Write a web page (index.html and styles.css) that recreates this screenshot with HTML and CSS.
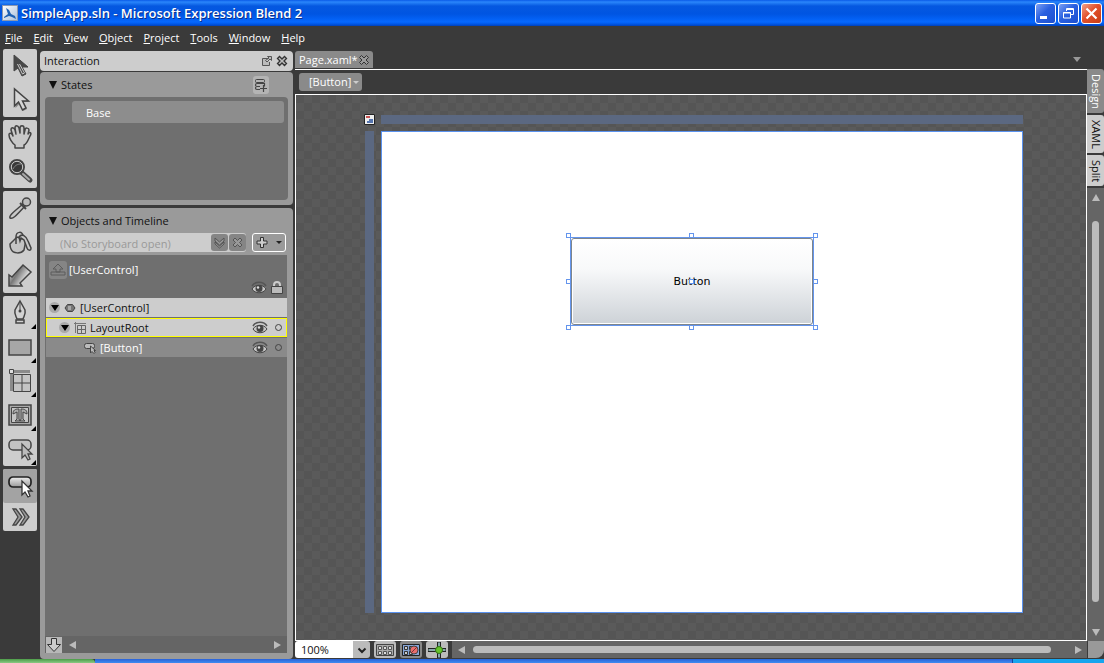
FILE: index.html
```html
<!DOCTYPE html>
<html lang="en">
<head>
    <meta charset="UTF-8">
    <meta name="viewport" content="width=device-width, initial-scale=1.0">
    <title>SimpleApp.sln - Microsoft Expression Blend 2</title>
    <link rel="stylesheet" href="styles.css">
</head>
<body>
    <!-- Title bar -->
    <header class="titlebar">
        <svg class="app-icon" width="16" height="16" viewBox="0 0 16 16">
            <defs><linearGradient id="appFill" x2="1" y2="1"><stop stop-color="#fff"/><stop offset="1" stop-color="#a9bfdb"/></linearGradient></defs>
            <rect x=".5" y=".5" width="15" height="15" fill="url(#appFill)" stroke="#8c99b0"/>
            <path d="M2 12L6 9L4 3L7 5L9 9L13 11L14 14L10 12L7 11L2 13Z" fill="#1f62b4"/>
        </svg>
        <h1>SimpleApp.sln - Microsoft Expression Blend 2</h1>
        <div class="window-buttons">
            <button type="button" aria-label="Minimize"><svg width="19" height="19" viewBox="0 0 19 19"><path d="M4 12h7v3H4z" fill="#fff"/></svg></button>
            <button type="button" aria-label="Restore"><svg width="19" height="19" viewBox="0 0 19 19" fill="none" stroke="#fff"><path d="M7.500 7V4.500h7v6H12M7 5.500h8M4.500 8.500h7v5.500h-7zM4 9h8"/></svg></button>
            <button type="button" class="close" aria-label="Close"><svg width="19" height="19" viewBox="0 0 19 19"><path d="M4.500 4.500l10 10M14.500 4.500l-10 10" stroke="#fff" stroke-width="2.200"/></svg></button>
        </div>
    </header>

    <nav class="menu">
        <button type="button"><u>F</u>ile</button>
        <button type="button"><u>E</u>dit</button>
        <button type="button"><u>V</u>iew</button>
        <button type="button"><u>O</u>bject</button>
        <button type="button"><u>P</u>roject</button>
        <button type="button"><u>T</u>ools</button>
        <button type="button"><u>W</u>indow</button>
        <button type="button"><u>H</u>elp</button>
    </nav>

    <main class="workspace">
        <!-- Toolbox -->
        <aside class="toolbox">
            <div class="tool-group">
                <button type="button" aria-label="Selection"><svg viewBox="0 0 28 28"><path d="M8 3v16l4-3 4 8 4-2-4-7h6z" fill="#484848" stroke="#444"/><path d="M11.500 12l5 10 2-1-5-9" fill="none" stroke="#ccc"/></svg></button>
                <button type="button" aria-label="Direct selection"><svg viewBox="0 0 28 28"><path d="M9.500 5v17l4-4 3.500 7 4-2-3.500-7h6z" fill="#888"/><path d="M8.500 3v17l4-4 4 8 3.500-2-3.500-7h6z" fill="#d6d6d6" stroke="#444" stroke-width="1.500"/></svg></button>
            </div>
            <div class="tool-group">
                <button type="button" aria-label="Pan"><svg viewBox="0 0 28 28"><path d="M9 25v-3c-3-2-6-7-6-10 0-3 3-2 4 1L5 7c0-3 3-3 4 0l1 4-1-6c0-3 3-3 4 0l1 5V5c0-3 4-3 4 0v6l1-4c0-3 4-2 4 0l-1 4c2-3 4-1 2 2-2 4-3 8-6 9v3z" fill="#c8c8c8" stroke="#444" stroke-width="1.500" stroke-linejoin="round"/></svg></button>
                <button type="button" aria-label="Zoom"><svg viewBox="0 0 28 28"><path d="M15 15l9 8" stroke="#484848" stroke-width="5" stroke-linecap="round"/><path d="M17 17l6 5.500" stroke="#aaa" stroke-width="2" stroke-linecap="round"/><circle cx="11" cy="10" r="7" fill="#383838" stroke="#444" stroke-width="2"/><circle cx="11" cy="10" r="5.700" fill="none" stroke="#ccc"/><path d="M7 12c2-4 5-5 8-5" stroke="#888" fill="none"/></svg></button>
            </div>
            <div class="tool-group">
                <button type="button" aria-label="Eyedropper"><svg viewBox="0 0 28 28"><path d="M4 24c-1-2 1-4 13-14l2 2C9 23 7 25 4 24z" fill="#c8c8c8" stroke="#444" stroke-width="1.500"/><path d="M14 9l6 6" stroke="#444" stroke-width="2"/><circle cx="20.500" cy="8" r="4" fill="#bbb" stroke="#444" stroke-width="1.500"/></svg></button>
                <button type="button" aria-label="Paint bucket"><svg viewBox="0 0 28 28"><path d="M4 16l7-7 9 3-2 10c-3 4-11 4-13-1-1-2-1-3-1-5z" fill="#c4c4c4" stroke="#444" stroke-width="1.500"/><path d="M10 16V9c0-6 7-6 7-1v2" fill="none" stroke="#444" stroke-width="1.500"/><path d="M13 9c3-4 7-1 9 4l3 7c0 3-3 3-4 0l-3-8-3-2-1 3z" fill="#c8c8c8" stroke="#444" stroke-width="1.500"/></svg></button>
                <button type="button" aria-label="Brush transform"><svg viewBox="0 0 28 28"><defs><linearGradient id="brushFill" x1="0" y1="0" x2="1" y2=".6"><stop offset=".2" stop-color="#ccc"/><stop offset=".45" stop-color="#777"/><stop offset=".9" stop-color="#eee"/></linearGradient></defs><path d="M3 24V13l3 2L17 3l8 7-11 11 2 3z" fill="url(#brushFill)" stroke="#444" stroke-width="1.500"/></svg></button>
            </div>
            <div class="tool-group">
                <button type="button" class="more" aria-label="Pen"><svg viewBox="0 0 28 28"><path d="M14 2l5 9c1 4-1 6-2 9h-6c-1-3-3-5-2-9z" fill="#d2d2d2" stroke="#444" stroke-width="1.500"/><path d="M14 3v9" stroke="#444"/><circle cx="14" cy="12" r="1.500" fill="#444"/><path d="M10 21h8v3h-8z" fill="#d2d2d2" stroke="#444" stroke-width="1.500"/></svg></button>
                <button type="button" class="more" aria-label="Rectangle"><svg viewBox="0 0 28 28"><rect x="3" y="7" width="22" height="15" fill="#a6a6a6" stroke="#444" stroke-width="1.500"/></svg></button>
                <button type="button" class="more" aria-label="Grid"><svg viewBox="0 0 28 28"><path d="M4 3h20v3H7v18H4z" fill="#8a8a8a"/><path d="M7.500 7.500h17v17h-17zM16 8v16M8 16h16" fill="#c4c4c4" stroke="#444"/><path d="M3.500 2.500h4v4h-4z" fill="#ddd" stroke="#444"/></svg></button>
                <button type="button" class="more" aria-label="Text block"><svg viewBox="0 0 28 28"><path d="M3 4h22v20H3z" fill="#aaa" stroke="#444" stroke-width="1.500"/><path d="M5.500 6.500h17v15h-17z" fill="#c5c5c5" stroke="#444"/><path d="M7 13c0-4 2-5 6-5v10l1 2H9l2-2v-7l-2 1zM21 13c0-4-2-5-6-5v10l-1 2h5l-2-2v-7l2 1z" fill="#aaa" stroke="#444"/></svg></button>
                <button type="button" class="more" aria-label="Button tool"><svg viewBox="0 0 28 28"><rect x="3" y="5" width="22" height="10" rx="4" fill="#c2c2c2" stroke="#444" stroke-width="1.500"/><path d="M16 9v14l3-3 3 5 2-1-2-5h4z" fill="#bbb" stroke="#444" stroke-width="1.300"/></svg></button>
            </div>
            <div class="tool-group">
                <button type="button" class="selected" aria-label="Button"><svg viewBox="0 0 28 28"><defs><linearGradient id="toolFill" x2="0" y2="1"><stop stop-color="#eee"/><stop offset="1" stop-color="#999"/></linearGradient></defs><rect x="3" y="5" width="22" height="10" rx="4" fill="url(#toolFill)" stroke="#222" stroke-width="1.700"/><path d="M16 9v14l3-3 3 5 2-1-2-5h4z" fill="#fff" stroke="#333" stroke-width="1.300"/></svg></button>
                <button type="button" class="library" aria-label="Asset library"><svg viewBox="0 0 28 28"><path d="M7 6h3l6 8-6 8H7l5-8zM14 6h3l6 8-6 8h-3l5-8z" fill="#999" stroke="#444" stroke-width="1.300"/></svg></button>
            </div>
        </aside>

        <!-- Interaction panel -->
        <section class="interaction">
            <header class="panel-head">
                <h2>Interaction</h2>
                <button type="button" aria-label="Float panel"><svg width="12" height="12" viewBox="0 0 12 12" fill="none" stroke="#555"><path d="M7 3.500H1.500v7h7V7M6.500 1.500h4v4L9 4 6 7 4.500 5.500 8 3z" fill="#bbb"/></svg></button>
                <button type="button" aria-label="Close panel"><svg width="12" height="12" viewBox="0 0 12 12"><path d="M1.500 3.500l2-2L6 4l2.500-2.500 2 2L8 6l2.500 2.500-2 2L6 8l-2.500 2.500-2-2L4 6z" fill="#bbb" stroke="#333" stroke-width="1.300"/></svg></button>
            </header>
            <section class="card states">
                <div class="card-head">
                    <h3>States</h3>
                    <button type="button" class="add-state" aria-label="Add state group"><svg width="15" height="16" viewBox="0 0 15 16" fill="none" stroke="#444"><rect x="2.500" y="2.500" width="9" height="3" rx="1"/><path d="M7 9.500H4c-2 0-2-3 0-3h7.500v3M7 12.500H4c-2 0-2-3 0-3M10.500 8v7M7 11.500h7" stroke-width="1.200"/></svg></button>
                </div>
                <div class="state-list">
                    <button type="button">Base</button>
                </div>
            </section>
            <section class="card objects">
                <div class="card-head">
                    <h3>Objects and Timeline</h3>
                </div>
                <div class="storyboard">
                    <div class="storyboard-box">
                        <input type="text" value="(No Storyboard open)" aria-label="Storyboard" readonly>
                        <button type="button" aria-label="Open storyboard"><svg width="15" height="15" viewBox="0 0 15 15"><path d="M3 3l4.500 4L12 3v3l-4.500 4L3 6zM3 7l4.500 4L12 7v2l-4.500 4L3 9z" fill="#999" stroke="#555"/></svg></button>
                        <button type="button" aria-label="Close storyboard"><svg width="15" height="15" viewBox="0 0 15 15"><path d="M3 5l2-2 2.500 2.500L10 3l2 2-2.500 2.500L12 10l-2 2-2.500-2.500L5 12l-2-2 2.500-2.500z" fill="#999" stroke="#555"/></svg></button>
                    </div>
                    <button type="button" class="new-storyboard" aria-label="New storyboard"><svg width="30" height="15" viewBox="0 0 30 15"><path d="M6.500 2.500h3v3.500H13v3h-3.500v3.500h-3V9H3V6h3.500z" fill="#ccc" stroke="#333"/><path d="M22 6h6l-3 3z" fill="#222"/></svg></button>
                </div>
                <div class="tree">
                    <div class="tree-top">
                        <div class="scope">
                            <button type="button" aria-label="Return scope"><svg width="18" height="18" viewBox="0 0 18 18"><path d="M9 3l5 5h-3v3H7V8H4zM2 11h14v3H2z" fill="#858585" stroke="#5c5c5c"/></svg></button>
                            <span>[UserControl]</span>
                        </div>
                        <div class="column-icons">
                            <svg class="eye" viewBox="0 0 16 14"><use href="#eye"/></svg>
                            <svg width="12" height="13" viewBox="0 0 12 13"><path d="M3 6V4c0-4 6-4 6 0v2" fill="none" stroke="#ccc" stroke-width="2"/><path d="M.5 5.500h11v7H.5z" fill="#bbb" stroke="#444"/></svg>
                        </div>
                    </div>
                    <div class="row light">
                        <button type="button" class="expander" aria-label="Collapse UserControl"></button>
                        <svg class="kind" viewBox="0 0 12 12"><path d="M1 6l2.500-3.500h5L11 6 8.500 9.500h-5z" fill="#777" stroke="#444"/><path d="M4 4h3v4H4z" fill="#aaa"/></svg>
                        <span>[UserControl]</span>
                    </div>
                    <div class="row light current">
                        <button type="button" class="expander" aria-label="Collapse LayoutRoot"></button>
                        <svg class="kind" viewBox="0 0 12 12" fill="none" stroke="#666"><path d="M0 1.500h12M1.500 0v11" stroke="#777"/><path d="M3.500 3.500h8v8h-8zM7.500 3.500v8M3.500 7.500h8"/></svg>
                        <span>LayoutRoot</span>
                        <button type="button" class="toggle" aria-label="Hide LayoutRoot"><svg class="eye" viewBox="0 0 16 14"><use href="#eye"/></svg></button>
                        <button type="button" class="lock" aria-label="Lock LayoutRoot"></button>
                    </div>
                    <div class="row child">
                        <svg class="kind" viewBox="0 0 12 12"><rect x=".5" y="1.500" width="10" height="5" rx="2" fill="#bbb" stroke="#444"/><path d="M6.500 4v7L8 9.500l2 2 1-1-1-2h1.500z" fill="#bbb" stroke="#444"/></svg>
                        <span>[Button]</span>
                        <button type="button" class="toggle" aria-label="Hide Button"><svg class="eye" viewBox="0 0 16 14"><use href="#eye"/></svg></button>
                        <button type="button" class="lock" aria-label="Lock Button"></button>
                    </div>
                    <div class="tree-foot">
                        <button type="button" aria-label="Arrange by Z order"><svg width="16" height="16" viewBox="0 0 16 16"><path d="M5.500 1.500h5v6h4L8 14.500 1.500 7.500h4z" fill="#ccc" stroke="#333"/></svg></button>
                        <span class="arrow left"></span>
                        <span class="arrow right"></span>
                    </div>
                </div>
            </section>
        </section>

        <!-- Document -->
        <section class="document">
            <div class="doc-tabs">
                <div class="doc-tab">
                    <button type="button">Page.xaml*</button>
                    <button type="button" aria-label="Close Page.xaml"><svg width="12" height="12" viewBox="0 0 12 12"><path d="M1.500 3.500l2-2L6 4l2.500-2.500 2 2L8 6l2.500 2.500-2 2L6 8l-2.500 2.500-2-2L4 6z" fill="#999" stroke="#333"/></svg></button>
                </div>
                <span class="arrow down"></span>
            </div>
            <div class="doc-body">
                <div class="breadcrumb">
                    <button type="button">[Button]<span class="arrow small"></span></button>
                </div>
                <div class="canvas">
                    <svg class="corner" width="11" height="11" viewBox="0 0 11 11"><path d="M.5.5h10v10H.5z" fill="#eee" stroke="#222"/><path d="M2 2h4v2H2z" fill="#c65555"/><path d="M5 5h4v4H3V7h2z" fill="#5574ae"/></svg>
                    <div class="ruler"></div>
                    <div class="ruler ruler-left"></div>
                    <div class="artboard">
                        <div class="selection">
                            <button type="button">Button</button>
                            <i class="handle nw"></i><i class="handle n"></i><i class="handle ne"></i>
                            <i class="handle w"></i><i class="handle mid"></i><i class="handle e"></i>
                            <i class="handle sw"></i><i class="handle s"></i><i class="handle se"></i>
                        </div>
                    </div>
                </div>
            </div>
            <div class="side">
                <button type="button" class="active">Design</button>
                <button type="button">XAML</button>
                <button type="button">Split</button>
                <div class="scroll vertical">
                    <span class="arrow up"></span>
                    <span class="thumb"></span>
                    <span class="arrow down"></span>
                </div>
            </div>
            <div class="doc-foot">
                <div class="zoom">
                    <select aria-label="Zoom">
                        <option>100%</option>
                    </select>
                    <svg width="10" height="7" viewBox="0 0 10 7"><path d="M1.500 1.500L5 5l3.500-3.500" fill="none" stroke="#222" stroke-width="2"/></svg>
                </div>
                <button type="button" aria-label="Show snap grid"><svg width="18" height="14" viewBox="0 0 18 14"><path d="M.5 1.500h17v11H.5z" fill="#aaa" stroke="#444"/><path d="M2.500 3.500h3v3h-3zM7.500 3.500h3v3h-3zM12.500 3.500h3v3h-3zM2.500 8.500h3v3h-3zM7.500 8.500h3v3h-3zM12.500 8.500h3v3h-3z" fill="#ddd" stroke="#555"/></svg></button>
                <button type="button" class="on" aria-label="Snap to grid"><svg width="18" height="14" viewBox="0 0 18 14"><path d="M.5 1.500h17v11H.5z" fill="#86a5d8" stroke="#222"/><path d="M2.500 3.500h3v3h-3zM7.500 3.500h3v3h-3zM2.500 8.500h3v3h-3zM7.500 8.500h3v3h-3z" fill="#ccc" stroke="#333"/><circle cx="12" cy="7" r="4" fill="#e86d6d" stroke="#444"/><path d="M9 10l6-6" stroke="#733"/></svg></button>
                <button type="button" aria-label="Snap to snaplines"><svg width="18" height="16" viewBox="0 0 18 16"><path d="M0 6.500h18v3H0zM9.500 0h3v16h-3z" fill="#8aa" stroke="#222"/><circle cx="11" cy="8" r="3.500" fill="#65c52c" stroke="#347318"/></svg></button>
                <div class="scroll">
                    <span class="arrow left"></span>
                    <span class="thumb"></span>
                    <span class="arrow right"></span>
                </div>
                <span class="grip"></span>
            </div>
        </section>
    </main>

    <footer class="taskbar"><span class="start"></span><span class="tasks"></span><span class="tray"></span></footer>

    <svg class="symbols" width="0" height="0">
        <symbol id="eye" viewBox="0 0 16 14">
            <path d="M1 8C4 3 12 3 15 8c-3 5-11 5-14 0z" fill="#c4c4c4" stroke="#444"/>
            <path d="M1 5C4 0 12 0 15 5" fill="none" stroke="#555" stroke-width="1.500"/>
            <circle cx="8" cy="7.500" r="3.500" fill="#444"/>
            <circle cx="7" cy="6.500" r="1.200" fill="#ddd"/>
        </symbol>
    </svg>
</body>
</html>
```
FILE: styles.css
```css
* {
    box-sizing: border-box;
}
body {
    margin: 0;
    height: 100vh;
    display: flex;
    flex-direction: column;
    overflow: hidden;
    background: #3a3a3a;
    color: #111;
    font-family: "Open Sans", "Noto Sans", sans-serif;
    font-size: 11px;
    line-height: 16px;
}
button, input, select {
    font: inherit;
    color: inherit;
    margin: 0;
    padding: 0;
    border: 0;
    background: none;
}
h1, h2, h3 {
    margin: 0;
    font-size: 11px;
    font-weight: normal;
}
svg {
    display: block;
    flex: none;
}
.symbols {
    position: absolute;
}
/* Title bar */
.titlebar {
    flex: none;
    display: flex;
    align-items: center;
    gap: 3px;
    height: 26px;
    padding: 0 2px;
    background: linear-gradient(#0a5be8 0, #2a86fb 2px, #0558e0 6px, #0055e2 14px, #0568ff 22px, #0057e6 24px, #0040b8);
}
.titlebar h1 {
    flex: 1;
    color: #fff;
    font-size: 13px;
    font-weight: 600;
    text-shadow: 1px 1px #0a2f8a;
    white-space: nowrap;
}
.window-buttons {
    display: flex;
    gap: 2px;
}
.window-buttons button {
    width: 21px;
    height: 21px;
    border: 1px solid #fff;
    border-radius: 3px;
    background: linear-gradient(135deg, #7ca0f4, #2a60e0 45%, #1c4fd0);
}
.window-buttons .close {
    background: linear-gradient(135deg, #f0a18a, #e2512c 45%, #c83d14);
}
/* Menu */
.menu {
    flex: none;
    display: flex;
    gap: 11px;
    height: 23px;
    padding: 1px 5px 0;
    color: #fff;
}
/* Workspace */
.workspace {
    flex: 1;
    min-height: 0;
    display: flex;
}
.toolbox {
    display: flex;
    flex-direction: column;
    gap: 3px;
    padding: 0 3px;
}
.tool-group {
    display: flex;
    flex-direction: column;
    background: #cdcdcd;
    border-radius: 2px;
}
.tool-group button {
    position: relative;
    width: 34px;
    height: 34px;
    padding: 3px;
}
.tool-group svg {
    width: 28px;
    height: 28px;
}
.tool-group .more::after {
    content: "";
    position: absolute;
    right: 1px;
    bottom: 1px;
    border-left: 5px solid transparent;
    border-bottom: 5px solid #000;
}
.tool-group .selected {
    background: #a3a3a3;
    border-radius: 2px;
}
.tool-group .library {
    height: 28px;
    padding: 0 3px;
}
/* Interaction panel */
.interaction {
    width: 253px;
    flex: none;
    display: flex;
    flex-direction: column;
    padding-top: 2px;
}
.panel-head {
    display: flex;
    align-items: center;
    gap: 3px;
    height: 20px;
    padding: 0 5px 0 4px;
    background: #cdcdcd;
    border-radius: 4px;
    margin-bottom: 1px;
}
.panel-head h2 {
    flex: 1;
}
.card {
    background: #9a9a9a;
    border-radius: 4px;
    padding: 0 5px 5px;
}
.states {
    height: 133px;
    margin-bottom: 3px;
    display: flex;
    flex-direction: column;
}
.card-head {
    display: flex;
    align-items: center;
    justify-content: space-between;
    height: 25px;
    padding: 0 19px 0 4px;
}
.card-head h3::before {
    content: "";
    display: inline-block;
    margin-right: 4px;
    border: 4px solid transparent;
    border-top: 8px solid #111;
    border-bottom: 0;
}
.add-state {
    width: 16px;
    height: 18px;
    background: #b4b4b4;
    border-radius: 3px;
}
.state-list {
    flex: 1;
    padding: 4px 4px 0 27px;
    background: #6f6f6f;
    border-radius: 4px;
}
.state-list button {
    display: block;
    width: 100%;
    height: 22px;
    padding: 1px 0 0 14px;
    background: #8d8d8d;
    border-radius: 3px;
    color: #fff;
    text-align: left;
}
.objects {
    flex: 1;
    display: flex;
    flex-direction: column;
    padding-bottom: 6px;
}
.storyboard {
    display: flex;
    gap: 6px;
    padding-right: 2px;
    margin-bottom: 3px;
}
.storyboard-box {
    flex: 1;
    display: flex;
    gap: 1px;
    height: 19px;
    background: #cdcdcd;
    border-radius: 3px;
}
.storyboard input {
    flex: 1;
    min-width: 0;
    padding: 2px 0 0 15px;
    color: #999;
}
.storyboard-box button {
    width: 17px;
    height: 17px;
    margin-top: 1px;
    padding: 0 1px;
    background: #858585;
    border-radius: 3px;
}
.storyboard .new-storyboard {
    width: 34px;
    height: 19px;
    padding: 0 1px;
    border: 1px solid #fff;
    border-radius: 3px;
}
.tree {
    flex: 1;
    display: flex;
    flex-direction: column;
    background: #6f6f6f;
    margin-right: 1px;
}
.tree-top {
    padding: 5px 4px 0;
    height: 43px;
    color: #fff;
}
.scope {
    display: flex;
    align-items: center;
    gap: 2px;
    height: 20px;
}
.scope button {
    background: #858585;
    border-radius: 3px;
}
.column-icons {
    display: flex;
    justify-content: flex-end;
    gap: 4px;
    padding-top: 1px;
}
.eye {
    width: 16px;
    height: 14px;
}
.row {
    display: flex;
    align-items: center;
    gap: 4px;
    height: 19px;
    padding: 0 5px 0 3px;
    margin: 0 0 1px 1px;
    background: #8a8a8a;
    color: #fff;
}
.row span {
    flex: 1;
}
.light {
    background: #cdcdcd;
    color: #111;
}
.current {
    border: 1px solid #ff0;
    padding: 0 4px 0 12px;
}
.child {
    padding-left: 38px;
}
.kind {
    width: 12px;
    height: 12px;
}
.expander {
    display: grid;
    place-items: center;
    width: 11px;
    height: 11px;
    border-radius: 6px;
    background: #aaa;
}
.expander::before {
    content: "";
    border: 4px solid transparent;
    border-top: 6px solid #000;
    border-bottom: 0;
}
.lock {
    width: 7px;
    height: 7px;
    margin-left: 3px;
    border: 1px solid #444;
    border-radius: 4px;
}
.tree-foot {
    display: flex;
    align-items: center;
    gap: 7px;
    height: 17px;
    margin-top: auto;
    padding: 0 6px 0 1px;
    background: #656565;
}
.tree-foot button {
    background: #b8b8b8;
}
.tree-foot .right {
    margin-left: auto;
}
/* Scroll arrows */
.arrow {
    flex: none;
    border: 4px solid transparent;
}
.arrow.left {
    border-right: 7px solid #bbb;
    border-left: 0;
}
.arrow.right {
    border-left: 7px solid #bbb;
    border-right: 0;
}
.arrow.up {
    border-bottom: 7px solid #bbb;
    border-top: 0;
}
.arrow.down {
    border-top: 7px solid #bbb;
    border-bottom: 0;
}
.arrow.small {
    border-width: 3px;
    border-top: 3px solid #ccc;
    border-bottom: 0;
}
/* Document */
.document {
    flex: 1;
    min-width: 0;
    display: grid;
    grid-template-columns: 1fr 17px;
    grid-template-rows: 20px 1fr 18px;
    padding-left: 2px;
}
.doc-tabs {
    grid-column: 1;
    display: flex;
    align-items: center;
    justify-content: space-between;
    padding: 2px 6px 1px 0;
}
.doc-tabs > .arrow {
    border-top: 5px solid #999;
}
.doc-tab {
    display: flex;
    align-items: center;
    height: 17px;
    padding: 0 3px 0 4px;
    background: #8a8a8a;
    border-radius: 3px 3px 0 0;
    color: #fff;
}
.doc-body {
    grid-column: 1;
    min-height: 0;
    display: flex;
    flex-direction: column;
    border-top: 1px solid #fff;
}
.breadcrumb {
    height: 24px;
    padding: 3px 4px;
}
.breadcrumb button {
    display: flex;
    align-items: center;
    gap: 2px;
    height: 18px;
    padding: 0 3px 0 10px;
    background: #8a8a8a;
    border-radius: 3px;
    color: #fff;
}
.canvas {
    flex: 1;
    display: grid;
    grid-template-columns: 11px 1fr;
    grid-template-rows: 11px 1fr;
    gap: 6px;
    padding: 19px 63px 27px 68px;
    border: 1px solid #fff;
    background: repeating-conic-gradient(#5a5a5a 0 25%, #555 0 50%) 0 0 / 16px 16px;
}
.ruler {
    height: 9px;
    background: #5b6881;
    align-self: center;
}
.ruler-left {
    width: 9px;
    height: 100%;
    justify-self: center;
}
.artboard {
    position: relative;
    border: 1px solid #5a92ee;
    background: #fff;
}
.selection {
    position: absolute;
    left: 188px;
    top: 105px;
    width: 244px;
    height: 89px;
    border: 1px solid #6495ed;
}
.selection button {
    display: block;
    width: 100%;
    height: 100%;
    border: 1px solid #7d858c;
    border-radius: 3px;
    box-shadow: inset 0 0 0 1px #fff;
    background: linear-gradient(#fff, #f8f9fa 35%, #cdd2d7);
    color: #000;
    font-family: "DejaVu Sans", sans-serif;
}
.handle {
    position: absolute;
    width: 5px;
    height: 5px;
    border: 1px solid #6495ed;
    background: #fff;
}
.nw, .n, .ne {
    top: -5px;
}
.sw, .s, .se {
    bottom: -5px;
}
.nw, .w, .sw {
    left: -5px;
}
.ne, .e, .se {
    right: -5px;
}
.n, .mid, .s {
    left: calc(50% - 3px);
}
.w, .mid, .e {
    top: calc(50% - 3px);
}
/* Right side view tabs and scrollbar */
.side {
    grid-column: 2;
    grid-row: 2;
    display: flex;
    flex-direction: column;
    gap: 2px;
}
.side button {
    writing-mode: vertical-rl;
    width: 17px;
    padding: 5px 0 4px;
    background: #cdcdcd;
    border-radius: 0 3px 3px 0;
    color: #111;
}
.side .active {
    background: #8a8a8a;
    color: #fff;
}
.scroll {
    flex: 1;
    display: flex;
    align-items: center;
    gap: 8px;
    padding: 0 5px 0 6px;
    background: #656565;
}
.scroll.vertical {
    flex-direction: column;
    gap: 20px;
    padding: 6px 0 5px;
}
.thumb {
    flex: 1;
    height: 7px;
    border-radius: 4px;
    background: #bbb;
}
.scroll:not(.vertical) .thumb {
    margin-right: 16px;
}
.vertical .thumb {
    width: 7px;
    margin-bottom: 7px;
}
.doc-foot {
    grid-column: 1 / 3;
    display: flex;
    align-items: center;
    gap: 4px;
    padding-bottom: 1px;
}
.zoom {
    position: relative;
    width: 75px;
    height: 17px;
}
.zoom select {
    appearance: none;
    width: 100%;
    height: 17px;
    padding-left: 6px;
    border-radius: 3px;
    background: linear-gradient(90deg, #fff 58px, #bbb 58px);
}
.zoom svg {
    position: absolute;
    right: 3px;
    top: 6px;
    pointer-events: none;
}
.doc-foot button {
    display: grid;
    place-items: center;
    width: 22px;
    height: 17px;
    border-radius: 3px;
    background: #bbb;
}
.doc-foot .on {
    background: #888;
}
.doc-foot .scroll {
    height: 17px;
}
.grip {
    width: 16px;
    height: 17px;
    margin-left: -3px;
    background: #999;
    border-radius: 0 0 8px 0;
}
/* Windows taskbar */
.taskbar {
    flex: none;
    display: flex;
    height: 4px;
}
.start {
    width: 95px;
    background: linear-gradient(#4c9c48, #8ac983);
    border-radius: 0 4px 0 0;
}
.tasks {
    flex: 1;
    background: linear-gradient(#2a62d8, #3f8cf0);
}
.tray {
    width: 92px;
    background: #17a5ee;
    border-left: 1px solid #1042a0;
}
```
